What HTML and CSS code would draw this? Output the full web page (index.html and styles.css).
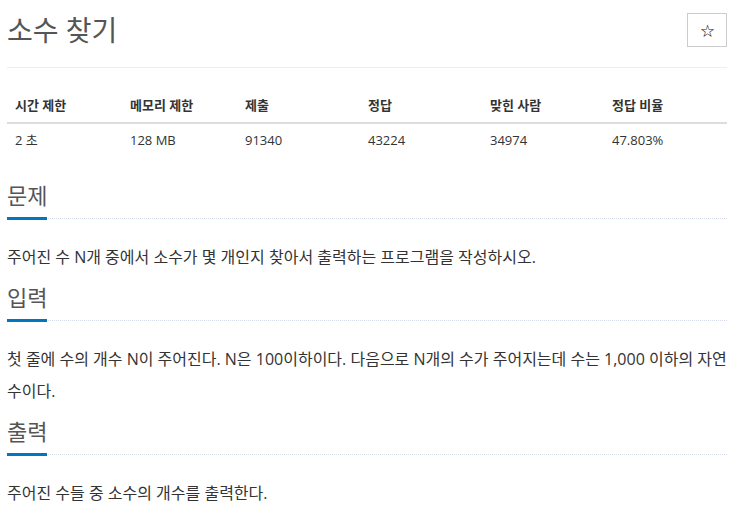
FILE: index.html
```html
<!DOCTYPE html>
<html lang="ko">
<head>
  <meta charset="UTF-8">
  <title>소수 찾기</title>
  <link rel="stylesheet" href="styles.css">
</head>
<body>

  <div class="container">
    <div class="page-header">
      <h1 id="problem_title">소수 찾기</h1>
      <button class="star-btn" title="즐겨찾기">☆</button>
    </div>

    <table class="problem-info">
      <thead>
        <tr>
          <th class="col-time">시간 제한</th>
          <th class="col-memory">메모리 제한</th>
          <th class="col-submit">제출</th>
          <th class="col-accept">정답</th>
          <th class="col-user">맞힌 사람</th>
          <th>정답 비율</th>
        </tr>
      </thead>
      <tbody>
        <tr>
          <td>2 초</td>
          <td>128 MB</td>
          <td>91340</td>
          <td>43224</td>
          <td>34974</td>
          <td>47.803%</td>
        </tr>
      </tbody>
    </table>

    <!-- 문제 -->
    <section class="problem-section">
      <div class="headline"><h2>문제</h2></div>
      <div class="problem-text">
        <p>주어진 수 N개 중에서 소수가 몇 개인지 찾아서 출력하는 프로그램을 작성하시오.</p>
      </div>
    </section>

    <!-- 입력 -->
    <section class="problem-section">
      <div class="headline"><h2>입력</h2></div>
      <div class="problem-text">
        <p>첫 줄에 수의 개수 N이 주어진다. N은 100이하이다. 다음으로 N개의 수가 주어지는데 수는 1,000 이하의 자연 수이다.</p>
      </div>
    </section>

    <!-- 출력 -->
    <section class="problem-section">
      <div class="headline"><h2>출력</h2></div>
      <div class="problem-text">
        <p>주어진 수들 중 소수의 개수를 출력한다.</p>
      </div>
    </section>
  </div>

</body>
</html>
```

FILE: styles.css
```css
body {
  margin: 0;
  background: #fff;
  color: #333;
  font-family: "Open Sans", "Noto Sans CJK KR", sans-serif;
}

.container {
  width: 720px;
  margin-left: 7px;
}

/* 제목 */
.page-header {
  display: flex;
  justify-content: space-between;
  align-items: center;
  padding: 13px 0 20px;
  border-bottom: 1px solid #eee;
}

.page-header h1 {
  margin: 0;
  font-size: 28px;
  font-weight: normal;
  line-height: 34px;
  color: #555;
}

.star-btn {
  width: 40px;
  height: 34px;
  padding: 0;
  background: #fff;
  border: 1px solid #ccc;
  color: #222;
  font-size: 15px;
  line-height: 1;
  cursor: pointer;
}

/* 문제 정보 표 */
.problem-info {
  width: 100%;
  margin-top: 20px;
  border-collapse: collapse;
  table-layout: fixed;
  font-size: 13px;
  text-align: left;
}

.problem-info th,
.problem-info td {
  padding: 8px;
  line-height: 18px;
}

.problem-info th {
  font-weight: bold;
  color: #333;
  border-bottom: 2px solid #ddd;
}

.col-time,
.col-memory {
  width: 99px;
}

.col-submit {
  width: 107px;
}

.col-accept,
.col-user {
  width: 106px;
}

.problem-info td {
  padding-top: 7px;
  padding-bottom: 9px;
}

/* 섹션 */
.problem-section {
  margin-top: 22px;
}

.problem-section + .problem-section {
  margin-top: 9px;
}

.headline {
  display: flex;
  border-bottom: 1px dotted #d5dbe6;
}

.headline h2 {
  margin: 0 0 -2px;
  padding: 0 0 7px;
  font-size: 22px;
  font-weight: normal;
  line-height: 30px;
  color: #555;
  border-bottom: 3px solid #0076c0;
}

.problem-text p {
  margin: 22px 0 0;
  font-size: 16px;
  line-height: 32px;
  word-break: keep-all;
}
```
